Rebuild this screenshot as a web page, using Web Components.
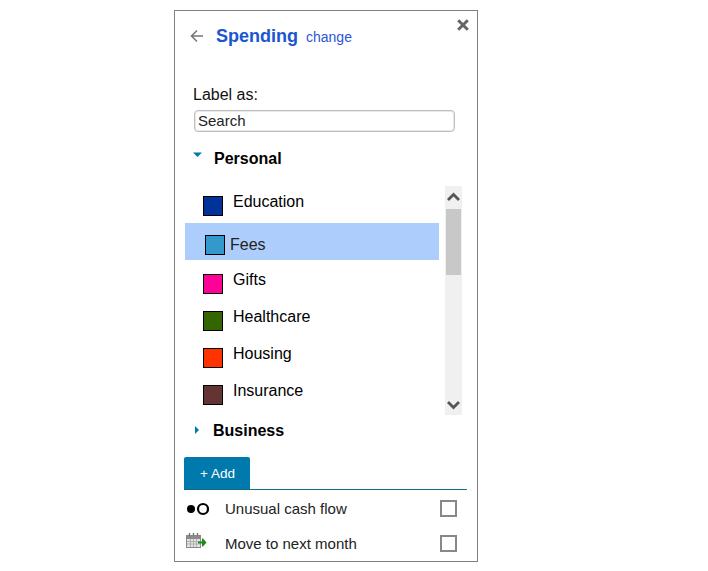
<!DOCTYPE html>
<html lang="en">
<head>
<meta charset="utf-8">
<title>Spending</title>
<style>
    body {
        margin: 10px 0 0 174px;
        font-family: "Liberation Sans", Arial, sans-serif;
        color: #000;
        background: #fff;
    }
</style>
</head>
<body>
<label-panel>
    <panel-header slot="header" title-text="Spending" link-text="change"></panel-header>
    <search-field label="Label as:" placeholder="Search"></search-field>
    <category-heading open>Personal</category-heading>
    <label-list>
        <label-item first color="#003399">Education</label-item>
        <label-item selected color="#3399cc">Fees</label-item>
        <label-item color="#ff0099">Gifts</label-item>
        <label-item color="#336600">Healthcare</label-item>
        <label-item color="#ff3300">Housing</label-item>
        <label-item color="#663333">Insurance</label-item>
    </label-list>
    <category-heading>Business</category-heading>
    <add-bar>+ Add</add-bar>
    <option-row icon="dots">Unusual cash flow</option-row>
    <option-row icon="calendar">Move to next month</option-row>
</label-panel>

<script>
'use strict';

class LabelPanel extends HTMLElement {
    constructor() {
        super();
        let shadowRoot = this.attachShadow({mode: 'open'});
        shadowRoot.innerHTML = `
            <style>
                :host {
                    display: block;
                    position: relative;
                    box-sizing: border-box;
                    width: 304px;
                    height: 552px;
                    border: 1px solid #808080;
                    overflow: hidden;
                }
                .close {
                    position: absolute;
                    top: 8px;
                    right: 8px;
                    width: 12px;
                    height: 12px;
                }
            </style>
            <slot name="header"></slot>
            <slot></slot>
            <svg class="close" viewBox="0 0 12 12">
                <path d="M1.2 1.2L10.8 10.8M10.8 1.2L1.2 10.8" stroke="#666" stroke-width="3" fill="none"/>
            </svg>
        `;
    }
}

class PanelHeader extends HTMLElement {
    constructor() {
        super();
        let shadowRoot = this.attachShadow({mode: 'open'});
        shadowRoot.innerHTML = `
            <style>
                :host {
                    display: flex;
                    align-items: baseline;
                    height: 50px;
                    box-sizing: border-box;
                    padding: 15px 0 0 15px;
                }
                svg {
                    width: 14px;
                    height: 14px;
                    margin-right: 12px;
                    align-self: flex-start;
                    margin-top: 3px;
                }
                .title {
                    font-size: 18px;
                    font-weight: bold;
                    color: #1a56d0;
                    margin-right: 8px;
                }
                .link {
                    font-size: 14px;
                    color: #2b55d6;
                }
            </style>
            <svg viewBox="0 0 14 14">
                <path d="M13 7H2M7 1.5L1.5 7L7 12.5" stroke="#777" stroke-width="1.6" fill="none"/>
            </svg>
            <span class="title"></span>
            <span class="link"></span>
        `;
    }

    connectedCallback() {
        this.shadowRoot.querySelector('.title').textContent = this.getAttribute('title-text');
        this.shadowRoot.querySelector('.link').textContent = this.getAttribute('link-text');
    }
}

class SearchField extends HTMLElement {
    constructor() {
        super();
        let shadowRoot = this.attachShadow({mode: 'open'});
        shadowRoot.innerHTML = `
            <style>
                :host {
                    display: block;
                    padding: 25px 0 0 18px;
                }
                .label {
                    display: block;
                    font-size: 16px;
                    line-height: 18px;
                    margin-bottom: 6px;
                    color: #111;
                }
                .box {
                    box-sizing: border-box;
                    width: 261px;
                    height: 22px;
                    margin-left: 1px;
                    padding: 1px 3px;
                    border: 1px solid #bfbfbf;
                    box-shadow: inset 0 0 0 1px #e8e8e8;
                    border-radius: 4px;
                    font-size: 15px;
                    line-height: 18px;
                    color: #222;
                }
            </style>
            <span class="label"></span>
            <div class="box"></div>
        `;
    }

    connectedCallback() {
        this.shadowRoot.querySelector('.label').textContent = this.getAttribute('label');
        this.shadowRoot.querySelector('.box').textContent = this.getAttribute('placeholder');
    }
}

class CategoryHeading extends HTMLElement {
    constructor() {
        super();
        let shadowRoot = this.attachShadow({mode: 'open'});
        shadowRoot.innerHTML = `
            <style>
                :host {
                    display: flex;
                    align-items: center;
                    height: 18px;
                    font-size: 16px;
                    font-weight: bold;
                    margin: 18px 0 0 18px;
                }
                .caret {
                    width: 20px;
                    flex: none;
                    height: 10px;
                    display: block;
                    margin-right: 1px;
                }
                :host([open]) .caret {
                    position: relative;
                    top: -4px;
                }
                :host(:not([open])) {
                    margin-top: 7px;
                }
                :host(:not([open])) .caret {
                    margin-right: 0;
                    position: relative;
                    top: -1px;
                }
            </style>
            <svg class="caret" viewBox="0 0 20 10"></svg>
            <slot></slot>
        `;
    }

    connectedCallback() {
        this.shadowRoot.querySelector('.caret').innerHTML = this.hasAttribute('open')
            ? '<path d="M0 2.5H9L4.5 7z" fill="#0079ad"/>'
            : '<path d="M2 1V9L6 5z" fill="#0079ad"/>';
    }
}

class LabelList extends HTMLElement {
    constructor() {
        super();
        let shadowRoot = this.attachShadow({mode: 'open'});
        shadowRoot.innerHTML = `
            <style>
                :host {
                    display: flex;
                    height: 229px;
                    margin: 18px 15px 0 10px;
                }
                .rows {
                    width: 254px;
                    overflow: hidden;
                    flex: none;
                }
                .bar {
                    display: flex;
                    flex-direction: column;
                    justify-content: space-between;
                    box-sizing: border-box;
                    width: 17px;
                    margin-left: 6px;
                    padding: 6px 0 5px;
                    background: #f0f0f0;
                    position: relative;
                }
                .bar svg {
                    display: block;
                    width: 15px;
                    height: 10px;
                    margin: 0 auto;
                }
                .thumb {
                    position: absolute;
                    left: 1px;
                    top: 23px;
                    width: 15px;
                    height: 66px;
                    background: #c8c8c8;
                }
            </style>
            <div class="rows"><slot></slot></div>
            <div class="bar">
                <svg viewBox="0 0 15 10"><path d="M2 8L7.5 2.5L13 8" stroke="#555" stroke-width="2.8" fill="none"/></svg>
                <div class="thumb"></div>
                <svg viewBox="0 0 15 10"><path d="M2 2L7.5 7.5L13 2" stroke="#555" stroke-width="2.8" fill="none"/></svg>
            </div>
        `;
    }
}

class LabelItem extends HTMLElement {
    constructor() {
        super();
        let shadowRoot = this.attachShadow({mode: 'open'});
        shadowRoot.innerHTML = `
            <style>
                :host {
                    display: flex;
                    align-items: flex-start;
                    box-sizing: border-box;
                    height: 37px;
                    padding: 11px 0 0 18px;
                    font-size: 16px;
                    line-height: 18px;
                }
                :host([first]) {
                    height: 33px;
                    padding-top: 7px;
                    margin-bottom: 4px;
                }
                :host([selected]) {
                    background: #adcdfc;
                    padding: 13px 0 0 20px;
                    color: #222;
                }
                .swatch {
                    box-sizing: border-box;
                    flex: none;
                    width: 20px;
                    height: 20px;
                    border: 1px solid #000;
                    margin: 3px 10px 0 0;
                }
                :host([selected]) .swatch {
                    margin: -1px 5px 0 0;
                }
            </style>
            <span class="swatch"></span>
            <slot></slot>
        `;
    }

    connectedCallback() {
        this.shadowRoot.querySelector('.swatch').style.background = this.getAttribute('color');
    }
}

class AddBar extends HTMLElement {
    constructor() {
        super();
        let shadowRoot = this.attachShadow({mode: 'open'});
        shadowRoot.innerHTML = `
            <style>
                :host {
                    display: block;
                    margin: 17px 10px 1px 9px;
                    border-bottom: 1px solid #146c8f;
                }
                button {
                    display: block;
                    box-sizing: border-box;
                    width: 66px;
                    height: 32px;
                    padding: 0 0 0 1px;
                    border: 0;
                    border-radius: 2px 2px 0 0;
                    background: #0079ad;
                    color: #fff;
                    font: 13.5px "Liberation Sans", Arial, sans-serif;
                }
            </style>
            <button type="button"><slot></slot></button>
        `;
    }
}

class OptionRow extends HTMLElement {
    constructor() {
        super();
        let shadowRoot = this.attachShadow({mode: 'open'});
        shadowRoot.innerHTML = `
            <style>
                :host {
                    display: flex;
                    align-items: center;
                    height: 35px;
                    padding-left: 10px;
                    font-size: 15px;
                    color: #222;
                }
                .icon {
                    flex: none;
                    width: 24px;
                    height: 18px;
                    margin-right: 16px;
                }
                .text {
                    flex: 1;
                }
                .check {
                    box-sizing: border-box;
                    flex: none;
                    width: 17px;
                    height: 17px;
                    margin-right: 20px;
                    border: 2px solid #888;
                    background: #fff;
                }
                :host([icon="calendar"]) .icon {
                    position: relative;
                    top: -3px;
                }
            </style>
            <svg class="icon" viewBox="0 0 24 18"></svg>
            <span class="text"><slot></slot></span>
            <span class="check"></span>
        `;
    }

    connectedCallback() {
        let icon = this.shadowRoot.querySelector('.icon');
        if (this.getAttribute('icon') === 'dots') {
            icon.innerHTML = `
                <circle cx="6" cy="9" r="4" fill="#000"/>
                <circle cx="18" cy="9" r="5" fill="none" stroke="#000" stroke-width="2.2"/>
            `;
        } else {
            icon.innerHTML = `
                <rect x="1" y="3" width="15" height="13" fill="#8a8a8a"/>
                <rect x="2" y="7" width="13" height="8" fill="#e4e4e4"/>
                <path d="M5.5 7V15M8.5 7V15M11.5 7V15M2 9.5H15M2 12H15" stroke="#b0b0b0" stroke-width="1"/>
                <path d="M4.5 1V4M8.5 1V4M12.5 1V4" stroke="#777" stroke-width="1.4"/>
                <path d="M13 9.5H17V6.5H18L21.5 10.5L18 14.5H17V11.5H13z" fill="#1e8a1e"/>
            `;
        }
    }
}

customElements.define('label-panel', LabelPanel);
customElements.define('panel-header', PanelHeader);
customElements.define('search-field', SearchField);
customElements.define('category-heading', CategoryHeading);
customElements.define('label-list', LabelList);
customElements.define('label-item', LabelItem);
customElements.define('add-bar', AddBar);
customElements.define('option-row', OptionRow);
</script>
</body>
</html>
